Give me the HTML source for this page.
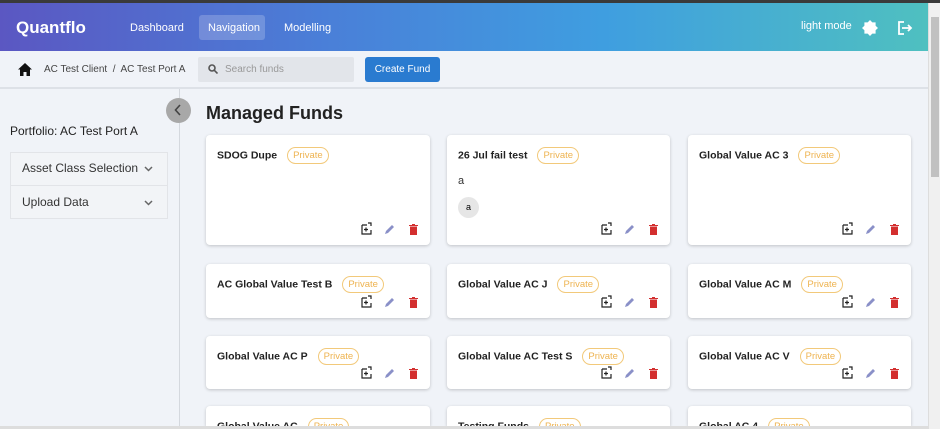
<!DOCTYPE html><html><head><style>
*{box-sizing:border-box;margin:0;padding:0}
html,body{width:940px;height:429px;overflow:hidden}
body{background:#f0f3f8;font-family:"Liberation Sans",sans-serif;position:relative}
.top{position:absolute;left:0;top:0;width:940px;height:3px;background:#3a3a3a}
.hdr{position:absolute;left:0;top:3px;width:928px;height:48px;background:linear-gradient(90deg,#5b57c2 0%,#4a7fd8 35%,#3f9ee0 65%,#4fc0c0 100%);color:#fff}
.a{position:absolute}
.sb{position:absolute;right:0;top:3px;width:12px;height:426px;background:#f0f0f0;border-left:1px solid #ddd}
.sb div{position:absolute;left:2px;top:14px;width:8px;height:160px;background:#c1c1c1}
.card{position:absolute;background:#fff;border-radius:4px;box-shadow:0 1px 3px rgba(0,0,0,.2)}
.card .t{position:absolute;left:11px;top:12px;font-size:10.5px;font-weight:bold;color:#222;white-space:nowrap}
.pv{display:inline-block;margin-left:10px;border:1px solid #f2c97a;border-radius:9px;color:#eeb350;font-weight:normal;font-size:9.5px;padding:2px 5px;vertical-align:middle}
.ic{position:absolute;bottom:9px;right:4px;width:66px;height:14px}
</style></head><body>
<div class="top"></div>
<div class="hdr">
<div class="a" style="left:16px;top:15px;font-size:17px;font-weight:bold">Quantflo</div>
<div class="a" style="left:130px;top:19px;font-size:11px">Dashboard</div>
<div class="a" style="left:199px;top:12px;width:66px;height:25px;background:rgba(255,255,255,.2);border-radius:3px"></div>
<div class="a" style="left:208px;top:19px;font-size:11px">Navigation</div>
<div class="a" style="left:284px;top:19px;font-size:11px">Modelling</div>
<div class="a" style="left:801px;top:17px;font-size:11px">light mode</div>
<svg class="a" style="left:862px;top:17px" width="16" height="16" viewBox="0 0 16 16"><path d="M8 0l2.3 2.4H13.6V5.7L16 8l-2.4 2.3v3.3H10.3L8 16l-2.3-2.4H2.4V10.3L0 8l2.4-2.3V2.4H5.7z" fill="#fff"/><path d="M7 4a4 4 0 010 8a3 3 0 000-8z" fill="#4ab0d0"/></svg>
<svg class="a" style="left:897px;top:18px" width="16" height="14" viewBox="0 0 16 14" fill="none" stroke="#fff" stroke-width="1.8"><path d="M7 1H2v12h5M5 7h9M11 4l3 3-3 3"/></svg>
</div>
<svg class="a" style="left:18px;top:63px" width="14" height="13" viewBox="0 0 14 13"><path d="M7 0L0 6.5h2V13h3.5V9h3v4H12V6.5h2z" fill="#111"/></svg>
<div class="a" style="left:44px;top:64px;font-size:10px;color:#444">AC Test Client &nbsp;/&nbsp; AC Test Port A</div>
<div class="a" style="left:198px;top:57px;width:156px;height:25px;background:#e2e5ea;border-radius:2px"></div>
<svg class="a" style="left:208px;top:64px" width="10" height="10" viewBox="0 0 10 10" fill="none" stroke="#555" stroke-width="1.6"><circle cx="4" cy="4" r="3"/><path d="M6.2 6.2L9.5 9.5"/></svg>
<div class="a" style="left:225px;top:64px;font-size:10px;color:#999">Search funds</div>
<div class="a" style="left:365px;top:57px;width:75px;height:25px;background:#2a7bd0;border-radius:3px;color:#fff;font-size:10px;text-align:center;line-height:25px">Create Fund</div>
<div class="a" style="left:0;top:87px;width:928px;height:2px;background:#dde1e7"></div>
<div class="a" style="left:179px;top:89px;width:1px;height:340px;background:#d4d8de"></div>
<div class="a" style="left:166px;top:98px;width:25px;height:25px;border-radius:50%;background:#a8a8a8"></div>
<svg class="a" style="left:174px;top:104px" width="8" height="12" viewBox="0 0 8 12" fill="none" stroke="#444" stroke-width="1.6"><path d="M6 1L1.5 6 6 11"/></svg>
<div class="a" style="left:10px;top:124px;font-size:12px;color:#222">Portfolio: AC Test Port A</div>
<div class="a" style="left:10px;top:152px;width:158px;height:67px;background:#f2f4f7;border:1px solid #e2e4e8"></div>
<div class="a" style="left:10px;top:185px;width:158px;height:1px;background:#e2e4e8"></div>
<div class="a" style="left:22px;top:161px;font-size:12px;color:#333">Asset Class Selection</div>
<div class="a" style="left:22px;top:195px;font-size:12px;color:#333">Upload Data</div>
<svg class="a" style="left:144px;top:166px" width="9" height="6" viewBox="0 0 9 6" fill="none" stroke="#666" stroke-width="1.5"><path d="M1 1l3.5 3.5L8 1"/></svg>
<svg class="a" style="left:144px;top:200px" width="9" height="6" viewBox="0 0 9 6" fill="none" stroke="#666" stroke-width="1.5"><path d="M1 1l3.5 3.5L8 1"/></svg>
<div class="a" style="left:206px;top:103px;font-size:18px;font-weight:bold;color:#222">Managed Funds</div>

<svg width="0" height="0" style="position:absolute"><defs><g id="ic"><path d="M2 3h5M2 3v9h9V8M8 1h3v3" fill="none" stroke="#222" stroke-width="1.2"/><path d="M4 7.5h4M6 5.5v4" stroke="#222" stroke-width="1.2"/><path d="M25 12l1-3 6-6 2 2-6 6z" fill="#8a90c8"/><path d="M49 3h9v1h-9zM50 4.5h7V13h-7zM52 2h3v1h-3z" fill="#d32f2f"/></g></defs></svg>

<div class="card" style="left:206px;top:135px;width:224px;height:110px"><div class="t">SDOG Dupe<span class="pv">Private</span></div><svg class="ic" viewBox="0 0 66 14"><use href="#ic"/></svg></div>
<div class="card" style="left:447px;top:135px;width:223px;height:110px"><div class="t">26 Jul fail test<span class="pv">Private</span></div><div class="a" style="left:11px;top:40px;font-size:11px;color:#333">a</div><div class="a" style="left:11px;top:62px;width:21px;height:21px;border-radius:50%;background:#e6e6e6;font-size:9px;text-align:center;line-height:21px">a</div><svg class="ic" viewBox="0 0 66 14"><use href="#ic"/></svg></div>
<div class="card" style="left:688px;top:135px;width:223px;height:110px"><div class="t">Global Value AC 3<span class="pv">Private</span></div><svg class="ic" viewBox="0 0 66 14"><use href="#ic"/></svg></div>

<div class="card" style="left:206px;top:264px;width:224px;height:54px"><div class="t">AC Global Value Test B<span class="pv">Private</span></div><svg class="ic" viewBox="0 0 66 14"><use href="#ic"/></svg></div>
<div class="card" style="left:447px;top:264px;width:223px;height:54px"><div class="t">Global Value AC J<span class="pv">Private</span></div><svg class="ic" viewBox="0 0 66 14"><use href="#ic"/></svg></div>
<div class="card" style="left:688px;top:264px;width:223px;height:54px"><div class="t">Global Value AC M<span class="pv">Private</span></div><svg class="ic" viewBox="0 0 66 14"><use href="#ic"/></svg></div>

<div class="card" style="left:206px;top:336px;width:224px;height:53px"><div class="t">Global Value AC P<span class="pv">Private</span></div><svg class="ic" viewBox="0 0 66 14"><use href="#ic"/></svg></div>
<div class="card" style="left:447px;top:336px;width:223px;height:53px"><div class="t">Global Value AC Test S<span class="pv">Private</span></div><svg class="ic" viewBox="0 0 66 14"><use href="#ic"/></svg></div>
<div class="card" style="left:688px;top:336px;width:223px;height:53px"><div class="t">Global Value AC V<span class="pv">Private</span></div><svg class="ic" viewBox="0 0 66 14"><use href="#ic"/></svg></div>

<div class="card" style="left:206px;top:406px;width:224px;height:20px;border-radius:4px 4px 0 0"><div class="t">Global Value AC<span class="pv">Private</span></div></div>
<div class="card" style="left:447px;top:406px;width:223px;height:20px;border-radius:4px 4px 0 0"><div class="t">Testing Funds<span class="pv">Private</span></div></div>
<div class="card" style="left:688px;top:406px;width:223px;height:20px;border-radius:4px 4px 0 0"><div class="t">Global AC 4<span class="pv">Private</span></div></div>
<div class="a" style="left:0;top:426px;width:928px;height:3px;background:#ddd"></div>
<div class="sb"><div></div></div>
</body></html>
